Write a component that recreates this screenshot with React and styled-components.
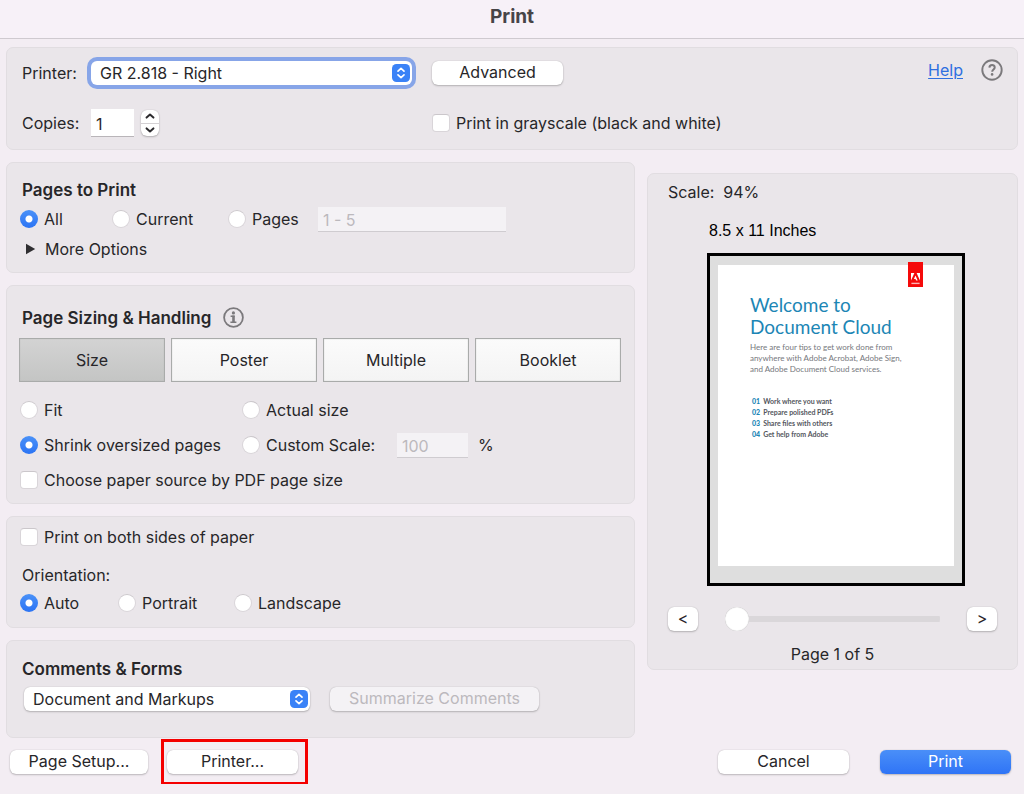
import React from "react";
import styled, { createGlobalStyle, css } from "styled-components";

const GlobalStyle = createGlobalStyle`
  *, *::before, *::after { box-sizing: border-box; }
  body {
    margin: 0;
    background: #f3edf3;
    color: #272629;
    font-family: Inter, "Liberation Sans", sans-serif;
    font-size: 16px;
    line-height: 20px;
  }
  button, input, select { font: inherit; color: inherit; margin: 0; }
`;

const TitleBar = styled.header`
  display: flex;
  justify-content: center;
  padding: 7px 0 11px;
  background: #f7f1f8;
  border-bottom: 1px solid #cfcad0;
`;

const Title = styled.h1`
  margin: 0;
  font-size: 19px;
  line-height: 20px;
  font-weight: 700;
  color: #464447;
`;

const Content = styled.main`
  padding: 8px 6px 10px;
`;

const Panel = styled.section`
  display: flex;
  flex-direction: column;
  background: #eae6ea;
  border: 1px solid #e1dde1;
  border-radius: 7px;
  padding: ${(p) => p.$pad || "0"};
`;

const PrinterGrid = styled.div`
  display: grid;
  grid-template-columns: 69px 341px 1fr auto;
  grid-template-rows: 28px 28px;
  row-gap: 22px;
  align-items: center;
`;

const HelpGroup = styled.div`
  display: flex;
  align-items: center;
  align-self: start;
  gap: 18px;
  padding-right: 14px;
`;

const HelpLink = styled.a`
  color: #2f6fe0;
  text-decoration: underline;
  text-underline-offset: 2px;
`;

const IconButton = styled.button`
  display: flex;
  padding: 0;
  border: 0;
  background: none;
`;

const Columns = styled.div`
  display: grid;
  grid-template-columns: minmax(0, 629fr) minmax(0, 371fr);
  column-gap: 12px;
  align-items: start;
  margin-top: 12px;
`;

const Stack = styled.div`
  display: flex;
  flex-direction: column;
  gap: 12px;
`;

const Heading = styled.h2`
  display: flex;
  align-items: center;
  gap: 12px;
  margin: 0;
  padding-left: 2px;
  font-size: 17px;
  line-height: 20px;
  font-weight: 600;
`;

const OptionGrid = styled.div`
  display: grid;
  grid-template-columns: ${(p) => p.$columns};
  grid-auto-rows: ${(p) => p.$row || "26px"};
  row-gap: ${(p) => p.$gap || "0"};
  align-items: center;
`;

const CommentsRow = styled.div`
  display: flex;
  align-items: center;
  gap: 20px;
  height: 40px;
  padding-left: 4px;
`;

const Inline = styled.div`
  display: flex;
  align-items: center;
  gap: ${(p) => p.$gap};
`;

const ChoiceLabel = styled.label`
  display: inline-flex;
  align-items: center;
  gap: 6px;
  white-space: nowrap;
`;

const Mark = styled.input`
  appearance: none;
  flex: none;
  width: 18px;
  height: 18px;
  background: #fff;
  border: 1px solid #d9d5d9;
  border-top-color: #cbc7cb;
  border-radius: ${(p) => (p.type === "radio" ? "50%" : "4px")};
  &[type="radio"]:checked {
    border: 0;
    background: radial-gradient(circle, #fff 3px, transparent 4px),
      linear-gradient(#4a91f8, #2c74f4);
  }
`;

const face = css`
  background: #fff;
  border: 0;
  border-radius: 6px;
  box-shadow: 0 0 1px rgba(0, 0, 0, 0.25), 0 1px 2px rgba(0, 0, 0, 0.22);
`;

const PushButton = styled.button`
  ${face}
  width: ${(p) => p.$width || "131px"};
  height: 24px;
  padding: 0 0 2px;
  line-height: 20px;
  text-align: center;
  white-space: nowrap;
  ${(p) =>
    p.$primary &&
    css`
      color: #fff;
      background: linear-gradient(#4a8ff8, #2f74f6);
    `}
  &:disabled {
    color: #bcb9bd;
    background: #f4f2f5;
  }
`;

const SelectBox = styled.div`
  position: relative;
  width: ${(p) => p.$width};
  height: 24px;
  svg {
    position: absolute;
    right: 2px;
    top: 3px;
    pointer-events: none;
  }
`;

const SelectField = styled.select`
  ${face}
  appearance: none;
  display: block;
  width: 100%;
  height: 24px;
  padding: 0 26px 0 9px;
  outline: none;
  ${(p) => p.$focused && css`box-shadow: 0 0 0 4px #87a5e8;`}
`;

const TextField = styled.input`
  width: ${(p) => p.$width};
  height: ${(p) => p.$height || "25px"};
  padding: 2px 5px 0;
  background: #fff;
  border: 0;
  border-bottom: 1px solid #b9b5b9;
  border-radius: 0;
  outline: none;
  &:disabled {
    color: #bcb9bd;
    background: #f4f2f5;
    border-bottom-color: #cfccd0;
  }
`;

const Stepper = styled.div`
  ${face}
  display: flex;
  flex-direction: column;
  width: 18px;
  height: 26px;
  overflow: hidden;
`;

const StepButton = styled.button`
  display: flex;
  flex: 1;
  align-items: center;
  justify-content: center;
  padding: 0;
  border: 0;
  background: none;
  & + & { border-top: 1px solid #d4d1d4; }
`;

const Disclosure = styled.button`
  display: flex;
  align-items: center;
  gap: 9px;
  padding: 0 0 0 5px;
  border: 0;
  background: none;
  line-height: 22px;
`;

const Segments = styled.div`
  display: grid;
  grid-template-columns: repeat(4, minmax(0, 1fr));
  gap: 6px;
  margin: 10px 0 15px -1px;
`;

const Segment = styled.button`
  height: 44px;
  padding: 0;
  border: 1px solid #a9abaa;
  box-shadow: inset 0 0 1px #a9abaa;
  background: ${(p) =>
    p.$active ? "linear-gradient(#d3d3d3, #c4c5c4)" : "linear-gradient(#fbfbfb, #f4f4f4)"};
`;

const PlainText = styled.p`
  margin: 0;
  padding-left: ${(p) => p.$indent || "0"};
  text-align: ${(p) => p.$align || "left"};
`;

const OrientationGroup = styled.div`
  display: flex;
  flex-direction: column;
  gap: 5px;
  margin-top: 18px;
`;

const PreviewPanel = styled(Panel)`
  margin-top: 11px;
`;

const Preview = styled.figure`
  margin: 19px 32px 0 39px;
  font-family: "Liberation Sans", Arial, sans-serif;
  color: #000;
`;

const PreviewFrame = styled.div`
  display: flex;
  aspect-ratio: 258 / 333;
  margin-top: 12px;
  padding: 9px 8px 17px;
  border: 3px solid #000;
  background: #dedede;
`;

const Sheet = styled.article`
  position: relative;
  flex: 1;
  padding: 29px 20px 0 32px;
  background: #fff;
  font-family: Lato, "Open Sans", sans-serif;
`;

const Flag = styled.svg`
  position: absolute;
  top: -3px;
  right: 31px;
`;

const SheetTitle = styled.h3`
  margin: 0;
  font-size: 19px;
  line-height: 22px;
  font-weight: 400;
  color: #1c86b5;
  white-space: nowrap;
`;

const SheetIntro = styled.p`
  margin: 4px 0 21px;
  font-size: 8px;
  line-height: 11px;
  color: #76787d;
  white-space: nowrap;
`;

const TipList = styled.ol`
  margin: 0;
  padding: 0 0 0 2px;
  list-style: none;
  font-size: 7px;
  line-height: 11px;
  font-weight: 700;
  color: #53565d;
`;

const Tip = styled.li`
  display: flex;
  gap: 3px;
  white-space: nowrap;
`;

const TipNumber = styled.span`
  color: #1c86b5;
  font-weight: 900;
`;

const Pager = styled.div`
  display: flex;
  align-items: center;
  margin: 21px 0 13px;
`;

const Slider = styled.input`
  appearance: none;
  flex: 1;
  min-width: 0;
  height: 24px;
  margin: 0 27px;
  background: linear-gradient(#dad7da, #dad7da) center / 100% 6px no-repeat;
  border-radius: 12px;
  &::-webkit-slider-thumb {
    appearance: none;
    width: 24px;
    height: 24px;
    border-radius: 50%;
    background: #fff;
    box-shadow: inset 0 0 1px rgba(0, 0, 0, 0.35);
  }
`;

const Footer = styled.footer`
  display: flex;
  align-items: center;
  padding: 12px 7px 0 4px;
`;

const Highlighted = styled.div`
  position: relative;
  margin: 0 auto 0 19px;
  &::after {
    content: "";
    position: absolute;
    inset: -11px -10px -11px -6px;
    border: 3px solid #f40000;
    pointer-events: none;
  }
`;

const Actions = styled.div`
  display: flex;
  gap: 31px;
`;

function Choice({ type = "radio", children, ...rest }) {
  return (
    <ChoiceLabel>
      <Mark type={type} {...rest} />
      {children}
    </ChoiceLabel>
  );
}

function PopUp({ width, focused, label, id, children }) {
  return (
    <SelectBox $width={width}>
      <SelectField id={id} aria-label={label} $focused={focused}>
        <option>{children}</option>
      </SelectField>
      <svg width="18" height="18" viewBox="0 0 18 18" fill="none" aria-hidden="true">
        <rect width="18" height="18" rx="4.5" fill="#3a82f7" />
        <path d="M6 7.2 9 4.4l3 2.8M6 10.9l3 2.8 3-2.8" stroke="#fff" strokeWidth="1.7" strokeLinecap="round" strokeLinejoin="round" />
      </svg>
    </SelectBox>
  );
}

function Chevron({ d }) {
  return (
    <svg width="10" height="6" viewBox="0 0 10 6" fill="none" aria-hidden="true">
      <path d={d} stroke="#2b2a2d" strokeWidth="2" strokeLinecap="round" strokeLinejoin="round" />
    </svg>
  );
}

function QuestionIcon() {
  return (
    <svg width="22" height="22" viewBox="0 0 22 22" fill="none" aria-hidden="true">
      <circle cx="11" cy="11" r="9.7" stroke="#7b797c" strokeWidth="1.9" />
      <path d="M8.4 8.6c.1-3.4 5.4-3.3 5.3-.2 0 2-2.5 2.1-2.5 4.3" stroke="#7b797c" strokeWidth="2" />
      <circle cx="11.1" cy="15.4" r="1.3" fill="#7b797c" />
    </svg>
  );
}

function InfoIcon() {
  return (
    <svg width="21" height="21" viewBox="0 0 21 21" fill="none" aria-hidden="true">
      <circle cx="10.5" cy="10.5" r="9.4" stroke="#7b797c" strokeWidth="1.8" />
      <circle cx="10.4" cy="5.9" r="1.6" fill="#7b797c" />
      <path d="M7.6 9.2h4M7.4 15.2h6" stroke="#7b797c" strokeWidth="1.6" />
      <path d="M10.5 8.6v6.6" stroke="#7b797c" strokeWidth="2.6" />
    </svg>
  );
}

const tips = [
  "Work where you want",
  "Prepare polished PDFs",
  "Share files with others",
  "Get help from Adobe",
];

export default function App() {
  return (
    <>
      <GlobalStyle />
      <TitleBar>
        <Title>Print</Title>
      </TitleBar>
      <Content>
        <Panel $pad="11px 0 12px 15px">
          <PrinterGrid>
            <label htmlFor="printer">Printer:</label>
            <PopUp id="printer" width="321px" focused>GR 2.818 - Right</PopUp>
            <PushButton>Advanced</PushButton>
            <HelpGroup>
              <HelpLink href="#help">Help</HelpLink>
              <IconButton aria-label="Help topics"><QuestionIcon /></IconButton>
            </HelpGroup>
            <label htmlFor="copies">Copies:</label>
            <Inline $gap="7px">
              <TextField id="copies" defaultValue="1" $width="43px" $height="28px" />
              <Stepper>
                <StepButton aria-label="More copies"><Chevron d="M1.6 4.6 5 1.6l3.4 3" /></StepButton>
                <StepButton aria-label="Fewer copies"><Chevron d="M1.6 1.4 5 4.4l3.4-3" /></StepButton>
              </Stepper>
            </Inline>
            <Choice type="checkbox">Print in grayscale (black and white)</Choice>
          </PrinterGrid>
        </Panel>

        <Columns>
          <Stack>
            <Panel $pad="17px 13px 12px">
              <Heading>Pages to Print</Heading>
              <OptionGrid $columns="92px 116px 90px 188px" $row="38px">
                <Choice name="pages" defaultChecked>All</Choice>
                <Choice name="pages">Current</Choice>
                <Choice name="pages">Pages</Choice>
                <TextField aria-label="Page range" defaultValue="1 - 5" disabled $width="100%" />
              </OptionGrid>
              <Disclosure aria-expanded="false">
                <svg width="11" height="12" viewBox="0 0 11 12" aria-hidden="true">
                  <path d="M1 .8 10.2 6 1 11.2z" fill="#2f2e31" />
                </svg>
                More Options
              </Disclosure>
            </Panel>

            <Panel $pad="21px 13px 10px">
              <Heading>Page Sizing &amp; Handling <InfoIcon /></Heading>
              <Segments>
                <Segment $active>Size</Segment>
                <Segment>Poster</Segment>
                <Segment>Multiple</Segment>
                <Segment>Booklet</Segment>
              </Segments>
              <OptionGrid $columns="222px 1fr" $gap="9px">
                <Choice name="sizing">Fit</Choice>
                <Choice name="sizing">Actual size</Choice>
                <Choice name="sizing" defaultChecked>Shrink oversized pages</Choice>
                <Inline $gap="10px">
                  <OptionGrid $columns="155px 71px">
                    <Choice name="sizing">Custom Scale:</Choice>
                    <TextField aria-label="Custom scale" defaultValue="100" disabled $width="100%" />
                  </OptionGrid>
                  <span>%</span>
                </Inline>
                <Choice type="checkbox">Choose paper source by PDF page size</Choice>
              </OptionGrid>
            </Panel>

            <Panel $pad="10px 13px 11px">
              <Choice type="checkbox">Print on both sides of paper</Choice>
              <OrientationGroup role="radiogroup" aria-labelledby="orientation-label">
                <PlainText id="orientation-label" $indent="2px">Orientation:</PlainText>
                <OptionGrid $columns="98px 116px auto">
                  <Choice name="orientation" defaultChecked>Auto</Choice>
                  <Choice name="orientation">Portrait</Choice>
                  <Choice name="orientation">Landscape</Choice>
                </OptionGrid>
              </OrientationGroup>
            </Panel>

            <Panel $pad="18px 13px 18px">
              <Heading>Comments &amp; Forms</Heading>
              <CommentsRow>
                <PopUp width="286px" label="Comments and forms">Document and Markups</PopUp>
                <PushButton disabled $width="209px">Summarize Comments</PushButton>
              </CommentsRow>
            </Panel>
          </Stack>

          <PreviewPanel $pad="8px 20px 5px">
            <PlainText>Scale: &nbsp;94%</PlainText>
            <Preview>
              <PlainText as="figcaption" $indent="2px">8.5 x 11 Inches</PlainText>
              <PreviewFrame>
                <Sheet>
                  <Flag width="15" height="25" viewBox="0 0 15 25" aria-hidden="true">
                    <rect width="15" height="25" fill="#f50a0a" />
                    <path d="M3 11h3.4L3 18.6zM12 11H8.6l3.4 7.6zM7.5 13.6l2.2 5H8.2l-.7-1.6H5.9z" fill="#fff" />
                    <path d="M3.4 21.4h8.2" stroke="#ffb3b3" strokeWidth="1.4" />
                  </Flag>
                  <SheetTitle>Welcome to<br />Document Cloud</SheetTitle>
                  <SheetIntro>
                    Here are four tips to get work done from<br />
                    anywhere with Adobe Acrobat, Adobe Sign,<br />
                    and Adobe Document Cloud services.
                  </SheetIntro>
                  <TipList>
                    {tips.map((tip, i) => (
                      <Tip key={tip}>
                        <TipNumber>0{i + 1}</TipNumber>
                        {tip}
                      </Tip>
                    ))}
                  </TipList>
                </Sheet>
              </PreviewFrame>
            </Preview>
            <Pager>
              <PushButton $width="30px" aria-label="Previous page">&lt;</PushButton>
              <Slider type="range" min="1" max="5" defaultValue="1" aria-label="Page" />
              <PushButton $width="30px" aria-label="Next page">&gt;</PushButton>
            </Pager>
            <PlainText $align="center">Page 1 of 5</PlainText>
          </PreviewPanel>
        </Columns>

        <Footer>
          <PushButton $width="138px">Page Setup...</PushButton>
          <Highlighted>
            <PushButton>Printer...</PushButton>
          </Highlighted>
          <Actions>
            <PushButton>Cancel</PushButton>
            <PushButton $primary>Print</PushButton>
          </Actions>
        </Footer>
      </Content>
    </>
  );
}
